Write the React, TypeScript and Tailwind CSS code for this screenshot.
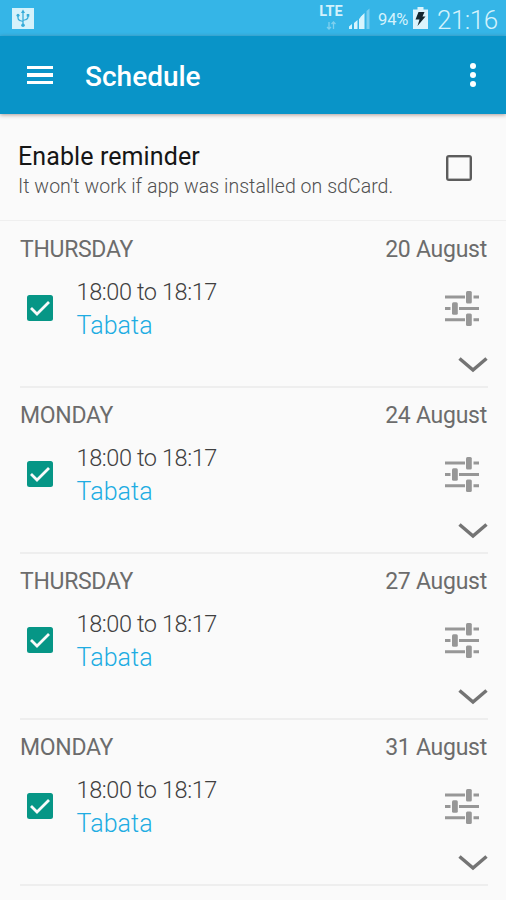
import React from "react";

const entries = [
  { day: "THURSDAY", date: "20 August" },
  { day: "MONDAY", date: "24 August" },
  { day: "THURSDAY", date: "27 August" },
  { day: "MONDAY", date: "31 August" },
];

function UsbIcon() {
  return (
    <svg className="mt-px ml-3 h-[21px] w-[22px] shrink-0" viewBox="0 0 22 21" fill="none">
      <rect width="22" height="21" fill="#d5f2fb" />
      <g stroke="#36acd9" strokeWidth="1.3">
        <path d="M11 4v13M6 7v3q0 2 2 2.500l3 1M16 7v2q0 2-2 2.500l-3 1" />
      </g>
      <g fill="#36acd9">
        <path d="M11 1.500l2 3.500H9z" />
        <circle cx="6" cy="7.200" r="1.500" />
        <rect x="14.700" y="6" width="2.600" height="2.600" />
        <circle cx="11" cy="17.300" r="1.800" />
      </g>
    </svg>
  );
}

function StatusBar() {
  return (
    <div className="flex h-9 items-center bg-[#35b5e7] text-[#d3f2fc]">
      <UsbIcon />
      <div className="ml-auto flex h-9 w-[26px] flex-col items-center pt-[5px]">
        <span className="text-[14.500px] leading-[14px] font-bold tracking-[0.1px]">LTE</span>
        <svg className="mt-0.5 h-[9px] w-3" viewBox="0 0 12 9" fill="none" stroke="#7fd0ee" strokeWidth="1.300">
          <path d="M4 1v7M2 6l2 2 2-2M8.500 8V1M6.500 3l2-2 2 2" />
        </svg>
      </div>
      <svg className="mt-px ml-[4px] h-[22px] w-[23px]" viewBox="0 0 23 22">
        <g fill="#d8f4fd">
          <path d="M1 18.500l3-2.500v5H1zM6 15l3.500-3v9H6zM11 11l4-4v14h-4z" />
          <path d="M12.500 9l4-4v16h-4z" />
        </g>
        <path d="M18.500 3l3-2.500V21h-3z" fill="#78cef0" />
      </svg>
      <span className="mt-[3px] ml-[7px] w-[31px] text-[16.500px] leading-5 tracking-[-0.1px] whitespace-nowrap">94%</span>
      <svg className="ml-1 h-[22px] w-[15px]" viewBox="0 0 15 22">
        <path d="M4.500 0h6v2.500H15V22H0V2.500h4.500z" fill="#dbf4fc" />
        <path d="M5.500 5h6L9.500 9.500h3L4.500 19l2-6.500h-4z" fill="#14272f" />
      </svg>
      <span className="mt-[3px] mr-[7px] ml-[9px] w-[62px] text-[26px] leading-9 font-light tracking-[-0.500px] whitespace-nowrap">21:16</span>
    </div>
  );
}

function AppBar() {
  return (
    <header className="relative flex h-[78px] items-center bg-[#0994c8] pr-7 pl-[27px] text-white shadow-[0_1px_4px_rgba(80,40,30,0.45)]">
      <div className="flex w-[26px] flex-col gap-1">
        <i className="h-[3.500px] bg-white" />
        <i className="h-[3.500px] bg-white" />
        <i className="h-[3.500px] bg-white" />
      </div>
      <h1 className="mt-[3px] ml-8 text-[28px] leading-8 font-medium whitespace-nowrap">Schedule</h1>
      <div className="mr-[2px] ml-auto flex flex-col gap-[3px]">
        <i className="size-[6px] rounded-full bg-white" />
        <i className="size-[6px] rounded-full bg-white" />
        <i className="size-[6px] rounded-full bg-white" />
      </div>
    </header>
  );
}

function Reminder() {
  return (
    <section className="flex h-[107px] items-start justify-between border-b border-[#efefef] pr-[34px] pl-[18px]">
      <div className="pt-[27px]">
        <h2 className="text-[25px] leading-8 tracking-[0.1px] whitespace-nowrap text-[#161616]">Enable reminder</h2>
        <p className="text-[19.500px] leading-7 font-light tracking-[0.050px] whitespace-nowrap text-[#505050]">
          It won't work if app was installed on sdCard.
        </p>
      </div>
      <div className="mt-[41px] size-[26px] rounded-[3px] border-[2px] border-[#5c5c5c] shadow-[inset_0_0_0_0.500px_#777777]" />
    </section>
  );
}

function CheckedBox() {
  return (
    <svg className="mt-[7px] h-[26px] w-[26px] shrink-0" viewBox="0 0 26 26" fill="none">
      <rect width="26" height="26" rx="2.500" fill="#069686" />
      <path d="M4 13l6 6L22 7" stroke="#fafafa" strokeWidth="2.800" />
    </svg>
  );
}

function TuneIcon() {
  return (
    <svg className="h-[36px] w-[35px]" viewBox="0 0 35 36" fill="#979797">
      <path d="M0 5.500h20v3H0zM28.500 5.500H34v3h-5.500zM0 17h5.500v3H0zM14 17h20v3H14zM0 28.200h20v3H0zM28.500 28.200H34v3h-5.500z" />
      <rect x="21" y="1" width="5.800" height="12.500" rx="1.500" />
      <rect x="7" y="12.300" width="5.800" height="12.500" rx="1.500" />
      <rect x="21" y="23.500" width="5.800" height="12.500" rx="1.500" />
    </svg>
  );
}

function Entry({ day, date }: { day: string; date: string }) {
  return (
    <article className="mr-[18px] ml-5 h-[166px] border-b-2 border-[#eeeeee]">
      <div className="flex justify-between pt-3 pr-px text-[23px] leading-8 tracking-[-0.3px] whitespace-nowrap text-[#6c6c6c]">
        <span>{day}</span>
        <span className="tracking-[-0.25px]">{date}</span>
      </div>
      <div className="flex pt-[22px] pl-[7px]">
        <CheckedBox />
        <div className="-mt-3 ml-[23.500px] whitespace-nowrap">
          <div className="text-[23.500px] leading-[33px] font-light tracking-[-0.400px] text-[#404040]">18:00 to 18:17</div>
          <div className="text-[25px] leading-[33px] font-light tracking-[0.1px] text-[#20ace2]">Tabata</div>
        </div>
        <div className="mt-[2px] ml-auto flex w-[43px] flex-col">
          <TuneIcon />
          <svg className="mt-[31px] ml-[13px] h-4 w-[30px]" viewBox="0 0 30 16" fill="none" stroke="#747474" strokeWidth="3.500">
            <path d="M1.500 1.500L15 13 28.500 1.500" />
          </svg>
        </div>
      </div>
    </article>
  );
}

export default function App() {
  return (
    <main className="h-[900px] w-[506px] overflow-hidden bg-[#fafafa] font-[Roboto,sans-serif]">
      <StatusBar />
      <AppBar />
      <Reminder />
      <div className="pt-px">
        {entries.map((entry) => (
          <Entry key={entry.date} day={entry.day} date={entry.date} />
        ))}
      </div>
    </main>
  );
}
